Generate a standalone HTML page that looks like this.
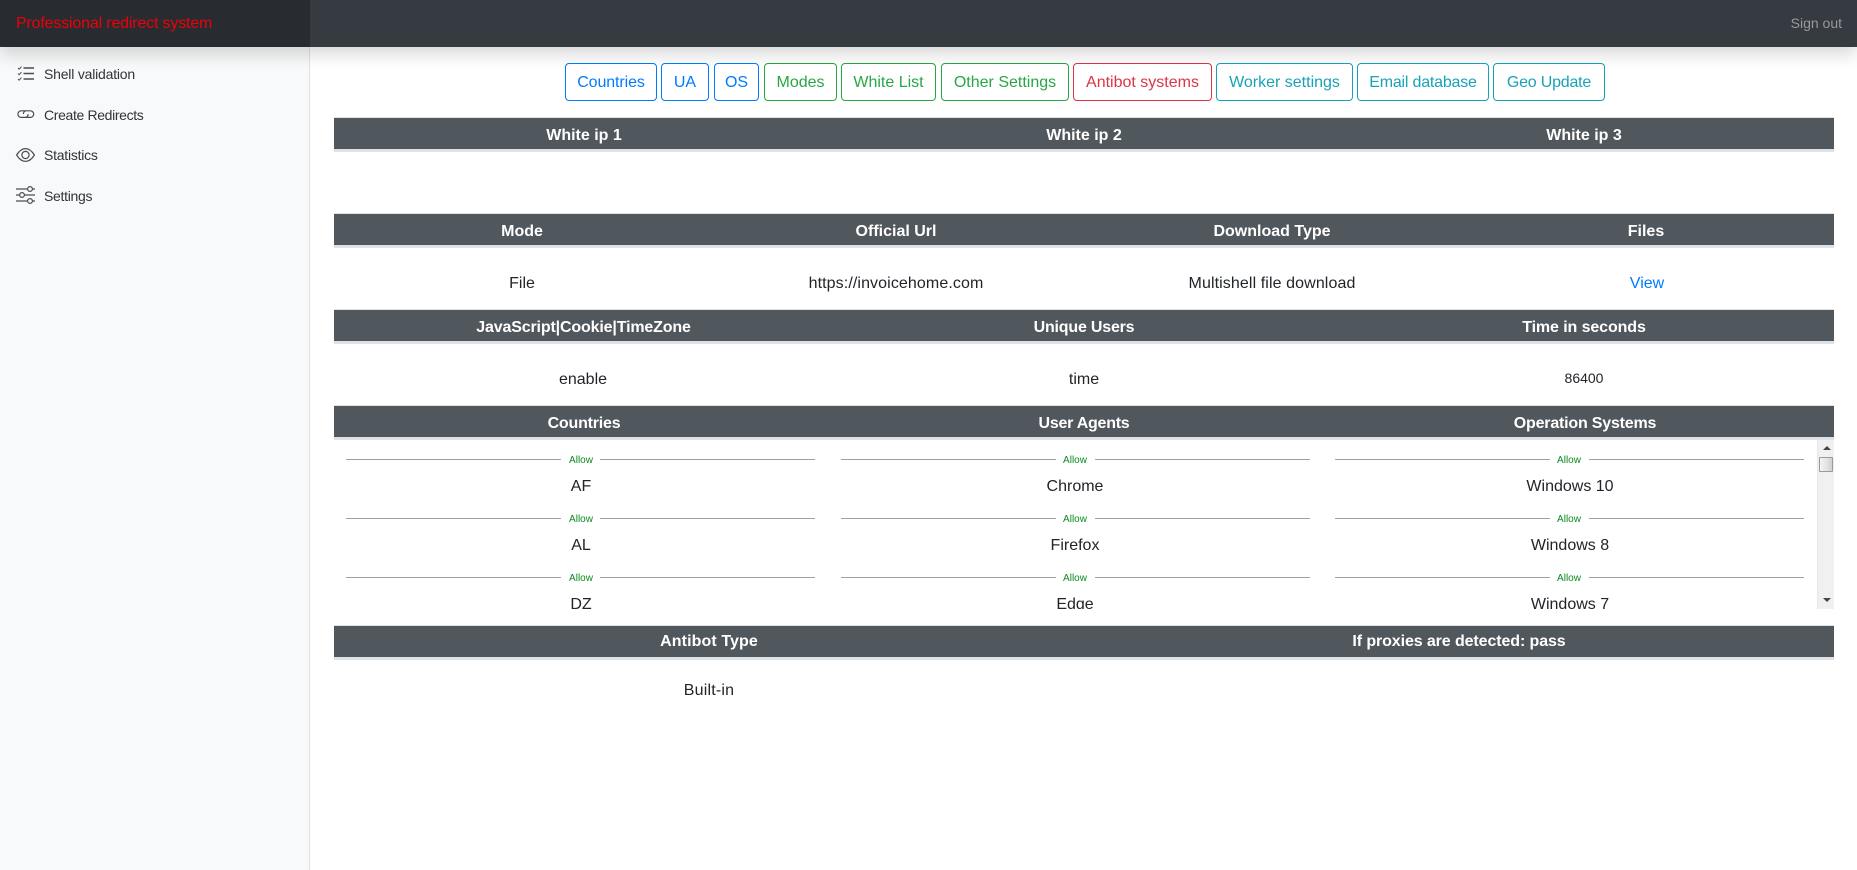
<!DOCTYPE html>
<html lang="en">
<head>
<meta charset="utf-8">
<title>Professional redirect system</title>
<style>
html,body{margin:0;padding:0;width:1857px;height:870px;overflow:hidden;background:#fff;}
body{position:relative;font-family:"Liberation Sans",sans-serif;font-size:16px;color:#212529;}
.top{position:absolute;left:0;top:0;width:1857px;height:47px;background:#363a41;box-shadow:0 8px 16px rgba(0,0,0,.15);z-index:5;}
.brand{position:absolute;left:0;top:0;width:310px;height:47px;background:#282c30;color:#ec000a;line-height:47px;text-indent:16px;font-size:16px;letter-spacing:-.17px;white-space:nowrap;}
.signout{position:absolute;right:15px;top:0;line-height:47px;font-size:14px;color:#96999d;}
.side{position:absolute;left:0;top:47px;width:309px;height:823px;background:#f8f9fa;border-right:1px solid #dee2e6;}
.nav{position:absolute;left:44px;line-height:20px;font-size:14px;color:#333;white-space:nowrap;}
.icons{position:absolute;left:0;top:0;z-index:2;}
.btn{position:absolute;top:63px;height:38px;box-sizing:border-box;border:1px solid;border-radius:4px;text-align:center;line-height:37px;font-size:16px;white-space:nowrap;background:#fff;}
.b{color:#007bff;border-color:#007bff;}
.g{color:#28a745;border-color:#28a745;}
.r{color:#dc3545;border-color:#dc3545;}
.t{color:#17a2b8;border-color:#17a2b8;}
.th{position:absolute;left:334px;width:1500px;height:31px;background:#50575d;border-top:1px solid #dee2e6;border-bottom:3px solid #dee2e6;margin-top:-1px;}
.h{position:absolute;transform:translateX(-50%);white-space:nowrap;color:#fff;font-weight:bold;font-size:16px;line-height:24px;}
.v{position:absolute;transform:translateX(-50%);white-space:nowrap;line-height:24px;font-size:16px;color:#212529;}
.scroll{position:absolute;left:334px;top:440px;width:1500px;height:169px;overflow:hidden;}
.ln{position:absolute;height:1px;background:#a0a0a0;width:215px;}
.al{position:absolute;transform:translateX(-50%);font-size:10px;line-height:12px;color:#0a8a1e;white-space:nowrap;}
.sb{position:absolute;left:1817px;top:440px;width:17px;height:169px;background:#f0f0f0;border-left:1px solid #e8e8e8;box-sizing:border-box;}
.thumb{position:absolute;left:1819px;top:457px;width:14px;height:15px;box-sizing:border-box;border:1px solid #9a9a9a;border-radius:1px;background:linear-gradient(90deg,#f4f4f4,#e2e2e2 60%,#cfcfcf);}
.au{position:absolute;left:1823px;top:446px;width:0;height:0;border-left:4px solid transparent;border-right:4px solid transparent;border-bottom:4px solid #444;}
.ad{position:absolute;left:1823px;top:598px;width:0;height:0;border-left:4px solid transparent;border-right:4px solid transparent;border-top:4px solid #444;}
</style>
</head>
<body>
<div class="side"></div>
<div class="top">
  <div class="brand">Professional redirect system</div>
  <div class="signout">Sign out</div>
</div>

<svg class="icons" width="50" height="220" viewBox="0 0 50 220" fill="none" stroke="#4d4d4d" stroke-width="1.2">
  <path d="M23.5 68H34M23.5 73.5H34M23.5 79H34" stroke-width="1.4"/>
  <path d="M18 68l1.2 1.2L21.5 66.6M18 73.5l1.2 1.2L21.5 72.1M18 79l1.2 1.2L21.5 77.6" stroke-width="1"/>
  <path d="M25.5 110.8H21.2a3.3 3.3 0 0 0 0 6.6H25.5a3 3 0 0 0 2.6-3.3"/>
  <path d="M26 117.4H30.4a3.3 3.3 0 0 0 0-6.6H26a3 3 0 0 0-2.6 3.3"/>
  <path d="M16.6 155C20 149.6 23 148.6 25.5 148.6S31 149.6 34.4 155C31 160.4 28 161.4 25.5 161.4S20 160.4 16.6 155Z"/>
  <circle cx="25.5" cy="155" r="3.6"/>
  <path d="M16 189H27.5M32.5 189H35M16 195H19.5M24.5 195H35M16 201H27.5M32.5 201H35"/>
  <circle cx="30" cy="189" r="2.4"/>
  <circle cx="22" cy="195" r="2.4"/>
  <circle cx="30" cy="201" r="2.4"/>
</svg>
<div class="nav" style="top:64px;letter-spacing:-.2px">Shell validation</div>
<div class="nav" style="top:105px;letter-spacing:-.35px">Create Redirects</div>
<div class="nav" style="top:145px;letter-spacing:-.24px">Statistics</div>
<div class="nav" style="top:186px;letter-spacing:-.3px">Settings</div>

<div class="btn b" style="left:565px;width:92px;letter-spacing:-.1px">Countries</div>
<div class="btn b" style="left:661px;width:48px">UA</div>
<div class="btn b" style="left:714px;width:45px">OS</div>
<div class="btn g" style="left:764px;width:73px">Modes</div>
<div class="btn g" style="left:841px;width:95px">White List</div>
<div class="btn g" style="left:941px;width:128px">Other Settings</div>
<div class="btn r" style="left:1073px;width:139px">Antibot systems</div>
<div class="btn t" style="left:1216px;width:137px">Worker settings</div>
<div class="btn t" style="left:1357px;width:132px;letter-spacing:-.2px">Email database</div>
<div class="btn t" style="left:1493px;width:112px;letter-spacing:-.2px">Geo Update</div>

<div class="th" style="top:118px"></div>
<div class="h" style="left:584px;top:124px">White ip 1</div>
<div class="h" style="left:1084px;top:124px">White ip 2</div>
<div class="h" style="left:1584px;top:124px">White ip 3</div>

<div class="th" style="top:214px"></div>
<div class="h" style="left:522px;top:220px">Mode</div>
<div class="h" style="left:896px;top:220px">Official Url</div>
<div class="h" style="left:1272px;top:220px">Download Type</div>
<div class="h" style="left:1646px;top:220px">Files</div>
<div class="v" style="left:522px;top:272px">File</div>
<div class="v" style="left:896px;top:272px;letter-spacing:.1px">https://invoicehome.com</div>
<div class="v" style="left:1272px;top:272px;letter-spacing:.1px">Multishell file download</div>
<div class="v" style="left:1647px;top:272px;color:#007bff">View</div>

<div class="th" style="top:310px"></div>
<div class="h" style="left:583.5px;top:316px;letter-spacing:-.15px">JavaScript|Cookie|TimeZone</div>
<div class="h" style="left:1084px;top:316px;letter-spacing:-.2px">Unique Users</div>
<div class="h" style="left:1584px;top:316px;letter-spacing:-.1px">Time in seconds</div>
<div class="v" style="left:583px;top:368px">enable</div>
<div class="v" style="left:1084px;top:368px">time</div>
<div class="v" style="left:1584px;top:366px;font-size:14px">86400</div>

<div class="th" style="top:406px"></div>
<div class="h" style="left:584px;top:412px;letter-spacing:-.2px">Countries</div>
<div class="h" style="left:1084px;top:412px;letter-spacing:-.25px">User Agents</div>
<div class="h" style="left:1585px;top:412px;letter-spacing:-.2px">Operation Systems</div>

<div class="scroll">
  <div class="ln" style="left:12px;top:19px"></div><div class="ln" style="left:266px;top:19px"></div>
  <div class="ln" style="left:507px;top:19px"></div><div class="ln" style="left:761px;top:19px"></div>
  <div class="ln" style="left:1001px;top:19px"></div><div class="ln" style="left:1255px;top:19px"></div>
  <div class="al" style="left:247px;top:15px">Allow</div>
  <div class="al" style="left:741px;top:15px">Allow</div>
  <div class="al" style="left:1235px;top:15px">Allow</div>
  <div class="v" style="left:247px;top:35px">AF</div>
  <div class="v" style="left:741px;top:35px">Chrome</div>
  <div class="v" style="left:1236px;top:35px">Windows 10</div>

  <div class="ln" style="left:12px;top:78px"></div><div class="ln" style="left:266px;top:78px"></div>
  <div class="ln" style="left:507px;top:78px"></div><div class="ln" style="left:761px;top:78px"></div>
  <div class="ln" style="left:1001px;top:78px"></div><div class="ln" style="left:1255px;top:78px"></div>
  <div class="al" style="left:247px;top:74px">Allow</div>
  <div class="al" style="left:741px;top:74px">Allow</div>
  <div class="al" style="left:1235px;top:74px">Allow</div>
  <div class="v" style="left:247px;top:94px">AL</div>
  <div class="v" style="left:741px;top:94px">Firefox</div>
  <div class="v" style="left:1236px;top:94px">Windows 8</div>

  <div class="ln" style="left:12px;top:137px"></div><div class="ln" style="left:266px;top:137px"></div>
  <div class="ln" style="left:507px;top:137px"></div><div class="ln" style="left:761px;top:137px"></div>
  <div class="ln" style="left:1001px;top:137px"></div><div class="ln" style="left:1255px;top:137px"></div>
  <div class="al" style="left:247px;top:133px">Allow</div>
  <div class="al" style="left:741px;top:133px">Allow</div>
  <div class="al" style="left:1235px;top:133px">Allow</div>
  <div class="v" style="left:247px;top:153px">DZ</div>
  <div class="v" style="left:741px;top:153px">Edge</div>
  <div class="v" style="left:1236px;top:153px">Windows 7</div>
</div>
<div class="sb"></div>
<div class="thumb"></div>
<div class="au"></div>
<div class="ad"></div>

<div class="th" style="top:626px"></div>
<div class="h" style="left:709px;top:630px;letter-spacing:.1px">Antibot Type</div>
<div class="h" style="left:1459px;top:630px;letter-spacing:-.1px">If proxies are detected: pass</div>
<div class="v" style="left:709px;top:679px;letter-spacing:.2px">Built-in</div>
</body>
</html>
